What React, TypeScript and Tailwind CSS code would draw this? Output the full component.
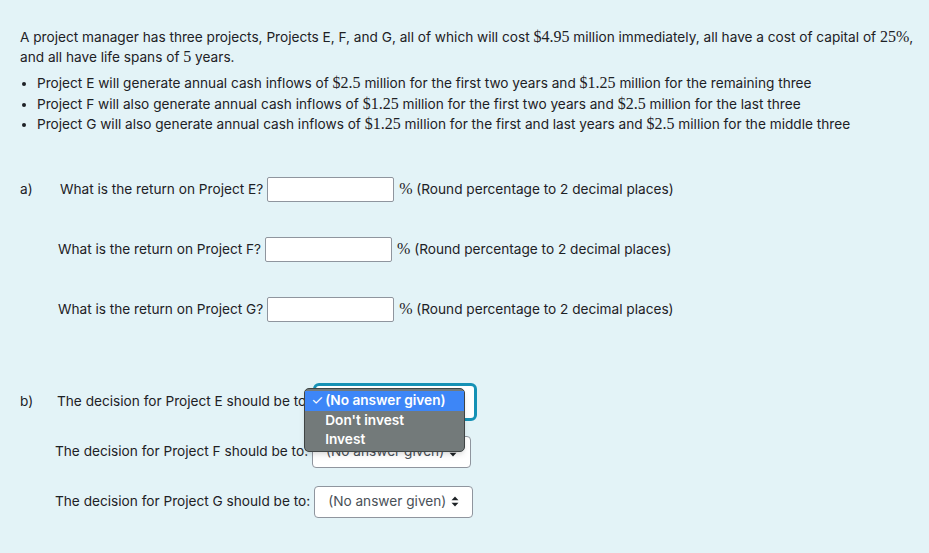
import React from "react";

const serif = "font-['Liberation_Serif',serif] text-[16px] leading-none";

const M: React.FC<{ children: React.ReactNode }> = ({ children }) => (
	<span className={serif}>{children}</span>
);

const UpDown = () => (
	<svg width="8" height="11" viewBox="0 0 8 11" className="ml-auto shrink-0">
		<path d="M4 0.5 L7.5 4.3 H0.5 Z" fill="#1d2125" />
		<path d="M4 10.5 L7.5 6.7 H0.5 Z" fill="#1d2125" />
	</svg>
);

const PercentRow: React.FC<{ label: string; first?: boolean }> = ({ label, first }) => (
	<div className="flex items-center h-[25px]">
		{first ? <span className="w-[40px]">a)</span> : <span className="w-[38px]" />}
		<span>{label}</span>
		<input
			type="text"
			className="ml-[4px] w-[127px] h-[25px] bg-white border border-[#8f959e] rounded-[2px]"
		/>
		<span className="ml-[5px]">
			<M>%</M> (Round percentage to 2 decimal places)
		</span>
	</div>
);

const SelectBox: React.FC<{ focused?: boolean }> = ({ focused }) => (
	<div
		className={
			focused
				? "ml-[3px] w-[164px] h-[38px] rounded-[6px] border-[3px] border-[#1591b5] bg-white flex items-center px-[12px] text-[#495057]"
				: "ml-[4px] w-[159px] h-[32px] rounded-[4px] border border-[#8f959e] bg-white flex items-center px-[13px] text-[#495057]"
		}
	>
		<span className="whitespace-nowrap">(No answer given)</span>
		<UpDown />
	</div>
);

const Dropdown = () => (
	<div className="absolute left-[-6px] top-[5px] w-[161px] rounded-[5px] border border-[#3f4444] bg-[#737a7a] py-[2px] text-white font-semibold shadow-md z-10">
		<div className="flex items-center h-[20px] bg-[#3d86f7] px-[6px]">
			<span className="w-[14px] font-normal">✓</span>
			<span>(No answer given)</span>
		</div>
		<div className="flex items-center h-[19px] pl-[20px]">Don't invest</div>
		<div className="flex items-center h-[19px] pl-[20px]">Invest</div>
	</div>
);

export default function App() {
	return (
		<div className="min-h-[553px] w-[929px] bg-[#e3f3f7] text-[#1d2125] text-[13.65px] font-['Inter',sans-serif] pl-[20px] pr-[6px] pt-[27px]">
			<p className="leading-[20px]">
				A project manager has three projects, Projects E, F, and G, all of which will cost{" "}
				<M>$4.95</M> million immediately, all have a cost of capital of <M>25%</M>, and all have
				life spans of <M>5</M> years.
			</p>
			<ul className="mt-[6px] list-disc pl-[17px] leading-[20.5px]">
				<li>
					Project E will generate annual cash inflows of <M>$2.5</M> million for the first two years
					and <M>$1.25</M> million for the remaining three
				</li>
				<li>
					Project F will also generate annual cash inflows of <M>$1.25</M> million for the first two
					years and <M>$2.5</M> million for the last three
				</li>
				<li>
					Project G will also generate annual cash inflows of <M>$1.25</M> million for the first and
					last years and <M>$2.5</M> million for the middle three
				</li>
			</ul>

			<div className="mt-[42px] flex flex-col gap-[35px]">
				<PercentRow first label="What is the return on Project E?" />
				<PercentRow label="What is the return on Project F?" />
				<PercentRow label="What is the return on Project G?" />
			</div>

			<div className="mt-[61px] flex flex-col">
				<div className="flex items-center h-[38px]">
					<span className="w-[37px]">b)</span>
					<span>The decision for Project E should be to:</span>
					<div className="relative">
						<SelectBox focused />
						<Dropdown />
					</div>
				</div>
				<div className="flex items-center h-[32px] mt-[15px]">
					<span className="w-[35px]" />
					<span>The decision for Project F should be to:</span>
					<SelectBox />
				</div>
				<div className="flex items-center h-[32px] mt-[18px]">
					<span className="w-[35px]" />
					<span>The decision for Project G should be to:</span>
					<SelectBox />
				</div>
			</div>
		</div>
	);
}
